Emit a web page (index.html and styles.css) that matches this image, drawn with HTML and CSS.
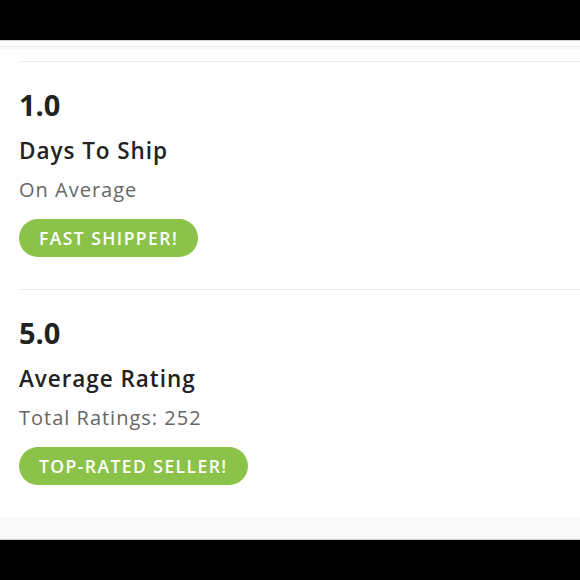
FILE: index.html
```html
<!DOCTYPE html>
<html>
<head>
<meta charset="utf-8">
<link rel="stylesheet" href="styles.css">
</head>
<body>
<div class="screen">
  <div class="topbar"></div>
  <div class="header-edge"></div>
  <main class="content">
    <section class="stat">
      <div class="rule"></div>
      <div class="stat-body">
        <div class="value">1.0</div>
        <div class="label">Days To Ship</div>
        <div class="sub">On Average</div>
        <span class="badge">FAST SHIPPER!</span>
      </div>
    </section>
    <section class="stat">
      <div class="rule"></div>
      <div class="stat-body">
        <div class="value">5.0</div>
        <div class="label">Average Rating</div>
        <div class="sub">Total Ratings: 252</div>
        <span class="badge">TOP-RATED SELLER!</span>
      </div>
    </section>
  </main>
  <div class="footer-band"></div>
  <div class="bottombar"></div>
</div>
</body>
</html>
```
FILE: styles.css
```css
html, body {
  margin: 0;
  padding: 0;
  background: #000;
}
.screen {
  width: 580px;
  height: 580px;
  display: flex;
  flex-direction: column;
  background: #fff;
  font-family: "Open Sans", "Lato", sans-serif;
  color: #222;
}
.topbar {
  height: 40px;
  background: #000;
  flex: none;
}
.header-edge {
  height: 8px;
  flex: none;
  border-top: 1px solid #d4d4d4;
  background: linear-gradient(#fff 0, #fff 4px, #f3f3f3 6px, #fbfbfb 8px);
}
.content {
  flex: 1;
  display: flex;
  flex-direction: column;
  padding-top: 12px;
}
.rule {
  height: 1px;
  margin-left: 19px;
  background: #eeeee9;
}
.stat-body {
  display: flex;
  flex-direction: column;
  align-items: flex-start;
  padding: 27px 0 32px 19px;
}
.value {
  font-size: 29px;
  line-height: 32px;
  font-weight: 700;
  color: #222;
}
.label {
  margin-top: 16px;
  font-size: 22.5px;
  line-height: 28px;
  font-weight: 600;
  letter-spacing: 0.95px;
  color: #222;
}
.sub {
  margin-top: 13px;
  font-size: 20px;
  line-height: 24px;
  letter-spacing: 1px;
  color: #666;
}
.badge {
  margin-top: 17px;
  height: 38px;
  line-height: 38px;
  padding: 0 20px;
  border-radius: 19px;
  background: #8bc34a;
  color: #fff;
  font-size: 17.5px;
  font-weight: 600;
  letter-spacing: 1.45px;
}
.footer-band {
  height: 22px;
  flex: none;
  background: #f9f9f9;
  border-bottom: 1px solid #cfcfcf;
}
.bottombar {
  height: 40px;
  flex: none;
  background: #000;
}
```
